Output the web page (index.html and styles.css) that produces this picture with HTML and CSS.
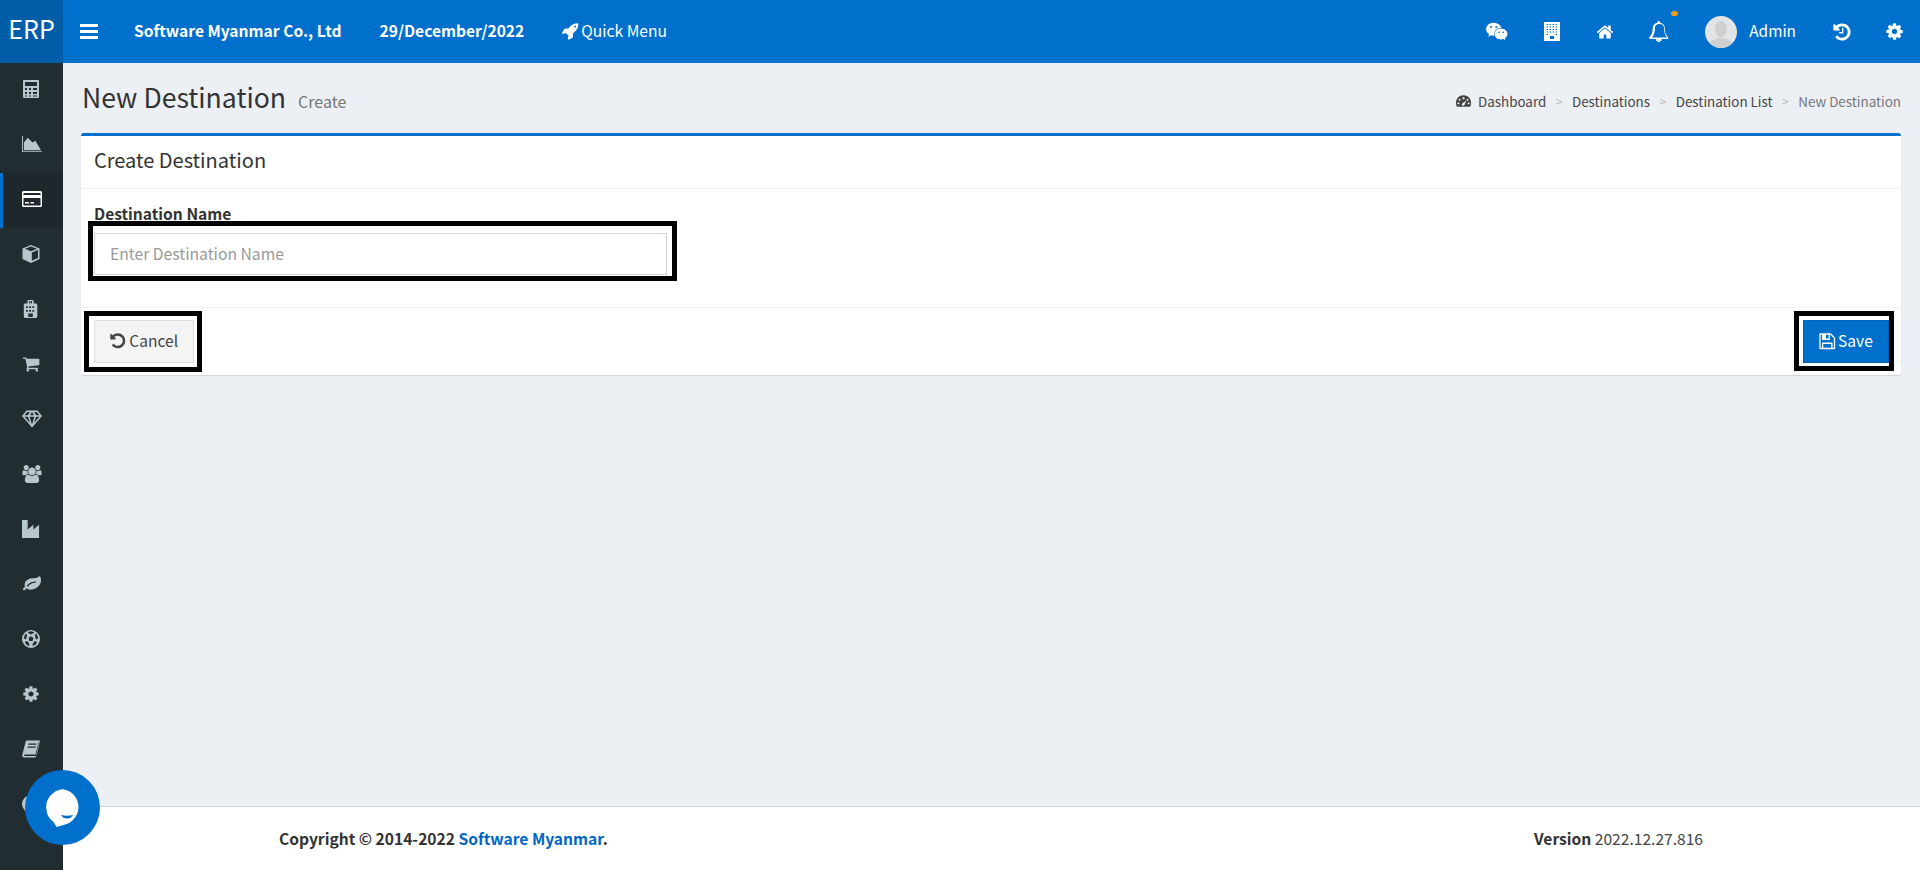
FILE: index.html
```html
<!DOCTYPE html>
<html lang="en">
<head>
<meta charset="utf-8">
<title>New Destination</title>
<link rel="stylesheet" href="styles.css">
</head>
<body>
<svg class="sprites" aria-hidden="true">
  <symbol id="i-undo" viewBox="0 0 1792 1792"><path d="M1664 896q0 156-61 298t-164 245-245 164-298 61q-172 0-327-72.500t-264-204.500q-7-10-6.500-22.500t8.500-20.500l137-138q10-9 25-9 16 2 23 12 73 95 179 147t225 52q104 0 198.500-40.500t163.500-109.500 109.500-163.500 40.500-198.500-40.500-198.500-109.500-163.500-163.500-109.500-198.500-40.500q-98 0-188 35.500t-160 101.500l137 138q31 30 14 69-17 40-59 40h-448q-26 0-45-19t-19-45v-448q0-42 40-59 39-17 69 14l130 129q107-101 244.500-156.500t284.500-55.500q156 0 298 61t245 164 164 245 61 298z"/></symbol>
</svg>
<header class="topbar">
  <div class="logo">ERP</div>
  <div class="bars"><span></span><span></span><span></span></div>
  <div class="company">Software Myanmar Co., Ltd</div>
  <div class="date">29/December/2022</div>
  <div class="quick">
    <svg class="ico-rocket" viewBox="0 0 1792 1792"><path d="M1504 448q0-40-28-68t-68-28-68 28-28 68 28 68 68 28 68-28 28-68zm224-288q0 249-75.500 430.500t-253.500 360.500q-81 80-195 176l-20 379q-2 16-16 26l-384 224q-7 4-16 4-12 0-23-9l-64-64q-13-14-8-32l85-276-281-281-276 85q-3 1-9 1-14 0-23-9l-64-64q-17-19-5-39l224-384q10-14 26-16l379-20q96-114 176-195 188-187 358-258t431-71q14 0 24 9.500t10 22.500z"/></svg>
    <span>Quick Menu</span>
  </div>
  <div class="top-right">
    <svg class="t-wechat" viewBox="0 0 2048 1792"><path d="M580 461q0-41-25-66t-66-25q-43 0-76 25.500t-33 65.500q0 39 33 64.500t76 25.500q41 0 66-24.500t25-65.500zm743 507q0-28-25.500-50t-65.500-22q-27 0-49.500 22.500t-22.500 49.500q0 28 22.500 50.500t49.500 22.500q40 0 65.500-22t25.500-51zm-236-507q0-41-24.500-66t-65.500-25q-43 0-76 25.500t-33 65.500q0 39 33 64.500t76 25.500q41 0 65.500-24.500t24.500-65.500zm635 507q0-28-26-50t-65-22q-27 0-49.500 22.500t-22.500 49.500q0 28 22.500 50.500t49.500 22.500q39 0 65-22t26-51zm-266-397q-31-4-70-4-169 0-311 77t-223.500 208.500-81.500 287.500q0 78 23 152-35 3-68 3-26 0-50-1.500t-55-6.500-44.500-7-54.500-10.500-50-10.500l-253 127 72-218q-290-203-290-490 0-169 97.500-311t264-223.500 363.500-81.500q176 0 332.500 66t262 182.500 136.500 260.500zm592 561q0 117-68.500 223.500t-185.500 193.500l55 181-199-109q-150 37-218 37-169 0-311-70.500t-223.500-191.500-81.500-264 81.500-264 223.500-191.500 311-70.500q161 0 303 70.500t227.500 192 85.500 263.500z"/></svg>
    <svg class="t-building" viewBox="0 0 32 38"><path fill-rule="evenodd" d="M0 0h32v38H0zM5 4v2h3V4zm6 0v2h3V4zm6 0v2h3V4zm6 0v2h3V4zM5 9v2h3V9zm6 0v2h3V9zm6 0v2h3V9zm6 0v2h3V9zM5 14v2h3v-2zm6 0v2h3v-2zm6 0v2h3v-2zm6 0v2h3v-2zM5 19v2h3v-2zm6 0v2h3v-2zm6 0v2h3v-2zm6 0v2h3v-2zM5 24v2h3v-2zm18 0v2h3v-2zM12 28v6h8v-6z"/></svg>
    <svg class="t-home" viewBox="0 0 1792 1792"><path d="M1472 992v480q0 26-19 45t-45 19h-384v-384h-256v384h-384q-26 0-45-19t-19-45v-480q0-1 .5-3t.5-3l575-474 575 474q1 2 1 6zm223-69l-62 74q-8 9-21 11h-3q-13 0-21-7l-692-577-692 577q-12 8-24 7-13-2-21-11l-62-74q-8-10-7-23.500t11-21.500l719-599q32-26 76-26t76 26l244 204v-195q0-14 9-23t23-9h192q14 0 23 9t9 23v408l219 182q10 8 11 21.500t-7 23.500z"/></svg>
    <div class="bell-wrap">
      <svg class="t-bell" viewBox="0 0 1792 1792"><path d="M912 1696q0-16-16-16-59 0-101.500-42.500t-42.500-101.500q0-16-16-16t-16 16q0 73 51.500 124.500t124.500 51.500q16 0 16-16zm-666-288h1300q-266-300-266-832 0-51-24-105t-69-103-121.500-80.500-169.500-31.500-169.500 31.500-121.500 80.500-69 103-24 105q0 532-266 832zm1418 0q0 52-38 90t-90 38h-448q0 106-75 181t-181 75-181-75-75-181h-448q-52 0-90-38t-38-90q50-42 91-88t85-119.500 74.500-158.500 50-206 19.500-260q0-152 117-282.500t307-158.500q-8-19-8-39 0-40 28-68t68-28 68 28 28 68q0 20-8 39 190 28 307 158.500t117 282.500q0 139 19.500 260t50 206 74.500 158.500 85 119.500 91 88z"/></svg>
      <span class="dot"></span>
    </div>
    <svg class="avatar" viewBox="0 0 32 32"><defs><clipPath id="av"><circle cx="16" cy="16" r="16"/></clipPath></defs><circle cx="16" cy="16" r="16" fill="#e3e4e6"/><g clip-path="url(#av)" fill="#cfcfd1"><ellipse cx="16" cy="13" rx="6" ry="8"/><path d="M3 32c0-7 6-8 10-10h6c4 2 10 3 10 10z"/></g></svg>
    <span class="admin">Admin</span>
    <svg class="t-history" viewBox="0 0 1792 1792"><use href="#i-undo"/><path d="M1024 544v448q0 14-9 23t-23 9h-320q-14 0-23-9t-9-23v-64q0-14 9-23t23-9h224v-352q0-14 9-23t23-9h64q14 0 23 9t9 23z"/></svg>
    <svg class="t-gear" viewBox="0 0 1792 1792"><path d="M1152 896q0-106-75-181t-181-75-181 75-75 181 75 181 181 75 181-75 75-181zm512-109v222q0 12-8 23t-20 13l-185 28q-19 54-39 91 35 50 107 138 10 12 10 25t-9 23q-27 37-99 108t-94 71q-12 0-26-9l-138-108q-44 23-91 38-16 136-29 186-7 28-36 28h-222q-14 0-24.500-8.500t-11.500-21.500l-28-184q-49-16-90-37l-141 107q-10 9-25 9-14 0-25-11-126-114-165-168-7-10-7-23 0-12 8-23 15-21 51-66.500t54-70.500q-27-50-41-99l-183-27q-13-2-21-12.500t-8-23.500v-222q0-12 8-23t19-13l186-28q14-46 39-92-40-57-107-138-10-12-10-24 0-10 9-23 26-36 98.500-107.500t94.500-71.500q13 0 26 10l138 107q44-23 91-38 16-136 29-186 7-28 36-28h222q14 0 24.500 8.500t11.500 21.500l28 184q49 16 90 37l142-107q9-9 24-9 13 0 25 10 129 119 165 170 7 8 7 22 0 12-8 23-15 21-51 66.500t-54 70.500q26 50 41 98l183 28q13 2 21 12.500t8 23.500z"/></svg>
  </div>
</header>
<div class="layout">
  <nav class="sidebar">
    <a class="nav-item"><svg viewBox="0 0 18 18"><path fill-rule="evenodd" d="M2 0h14a1 1 0 0 1 1 1v16a1 1 0 0 1-1 1H2a1 1 0 0 1-1-1V1a1 1 0 0 1 1-1zm1 2v4h12V2zm0 6v2h2V8zm4 0v2h2V8zm4 0v2h4V8zM3 12v2h2v-2zm4 0v2h2v-2zm4 0v2h4v-2zM3 15.500v1h2v-1zm4 0v1h2v-1zm4 0v1h4v-1z"/></svg></a>
    <a class="nav-item"><svg class="wide" viewBox="0 0 21 17"><path d="M0 0h1v16h20v1H0z"/><path d="M2 15V7l4-5 5 5 3-2 6 10z"/></svg></a>
    <a class="nav-item active"><svg class="wide" viewBox="0 0 20 16"><path fill-rule="evenodd" d="M1.500 0h17A1.500 1.500 0 0 1 20 1.500v13a1.500 1.500 0 0 1-1.500 1.500h-17A1.500 1.500 0 0 1 0 14.500v-13A1.500 1.500 0 0 1 1.500 0zM1.500 2v2h17V2zm0 5v7.500h17V7zM3 11h4v1.500H3zm5.500 0H12v1.500H8.500z"/></svg></a>
    <a class="nav-item"><svg viewBox="0 0 18 18"><path fill-rule="evenodd" d="M9 0l8.500 3.500v10.500L9 18 .5 14V3.500zM3 3.800L9 6.200l6-2.400-6-2.300zM9.800 7.600v8.200l6.200-2.800V5.100z"/></svg></a>
    <a class="nav-item"><svg viewBox="0 0 18 20"><path fill-rule="evenodd" d="M5 4V1l1-1h5l1 1v3h3l1 1v14l-1 1H2l-1-1V5l1-1zm2-3v3h1V3h1v1h1V1H9v1H8V1zM3.500 7v2h2V7zm3.500 0v2h2V7zm3.500 0v2h2V7zM3.500 11v2h2v-2zm3.500 0v2h2v-2zm3.500 0v2h2v-2zM6 15v4h5v-4z"/></svg></a>
    <a class="nav-item"><svg viewBox="0 0 1792 1792"><path d="M704 1536q0 52-38 90t-90 38-90-38-38-90 38-90 90-38 90 38 38 90zm896 0q0 52-38 90t-90 38-90-38-38-90 38-90 90-38 90 38 38 90zm128-1088v512q0 24-16.500 42.500t-40.500 21.500l-1044 122q13 60 13 70 0 16-24 64h920q26 0 45 19t19 45-19 45-45 19h-1024q-26 0-45-19t-19-45q0-11 8-31.500t16-36 21.500-40 15.500-29.500l-177-823h-204q-26 0-45-19t-19-45 19-45 45-19h256q16 0 28.500 6.500t19.500 15.500 13 24.500 8 26 5.500 29.500 4.500 26h1201q26 0 45 19t19 45z"/></svg></a>
    <a class="nav-item"><svg class="wide" viewBox="0 0 20 17"><path fill-rule="evenodd" d="M4.500 0h11L20 5.500 10 17 0 5.500zM5.200 1.500L2.500 4.800h3.300L7.800 1.500zm4.800 0L8 4.800h4l-2-3.300zm2.200 0l2 3.300h3.300l-2.700-3.300zM2.600 6.300l5.400 6.200-2-6.200zm5 0L10 14l2.400-7.700zm6.400 0l-2 6.200 5.400-6.200z"/></svg></a>
    <a class="nav-item"><svg class="wide" viewBox="0 0 1920 1792"><path d="M593 896q-162 5-265 128h-134q-82 0-138-40.500t-56-118.500q0-353 124-353 6 0 43.500 21t97.500 42.500 119 21.500q67 0 133-23-5 37-5 66 0 139 81 256zm1071 637q0 120-73 189.500t-194 69.500h-874q-121 0-194-69.500t-73-189.500q0-53 3.500-103.500t14-109 26.500-108.500 43-97.500 62-81 85.500-53.500 111.500-20q10 0 43 21.500t73 48 107 48 135 21.500 135-21.500 107-48 73-48 43-21.500q61 0 111.500 20t85.500 53.500 62 81 43 97.500 26.500 108.500 14 109 3.500 103.500zm-1024-1277q0 106-75 181t-181 75-181-75-75-181 75-181 181-75 181 75 75 181zm704 384q0 159-112.500 271.500t-271.500 112.500-271.500-112.500-112.500-271.500 112.500-271.500 271.500-112.500 271.500 112.500 112.500 271.500zm576 225q0 78-56 118.500t-138 40.500h-134q-103-123-265-128 81-117 81-256 0-29-5-66 66 23 133 23 59 0 119-21.500t97.500-42.500 43.500-21q124 0 124 353zm-128-609q0 106-75 181t-181 75-181-75-75-181 75-181 181-75 181 75 75 181z"/></svg></a>
    <a class="nav-item"><svg viewBox="0 0 19 19"><path d="M0 0h6v10l6-5v5l6-5v14H0z"/></svg></a>
    <a class="nav-item"><svg class="wide" viewBox="0 0 1792 1792"><path d="M1280 704q0-26-19-45t-45-19q-172 0-318 49.500t-259.500 134-235.500 219.500q-19 21-19 45 0 26 19 45t45 19q24 0 45-19 27-24 74-71t67-66q137-124 268.500-176t313.500-52q26 0 45-19t19-45zm512-198q0 95-20 193-46 224-184.500 383t-357.500 268q-214 108-438 108-148 0-286-47-15-5-88-42t-96-37q-16 0-39.500 32t-45 70-52.500 70-60 32q-30 0-51-11t-31-24-27-42q-2-4-6-11t-5.500-10-3-9.500-1.500-13.500q0-35 31-73.500t68-65.500 68-56 31-48q0-4-14-38t-16-44q-9-51-9-104 0-115 43.500-220t119-184.500 170.500-139 204-95.500q55-18 145-25.500t179.500-9 178.500-6 163.500-24 113.500-56.500l29.500-29.500 29.500-28 27-20 36.500-16 43.500-4.500q39 0 70.500 46t47.500 112 24 124 8 96z"/></svg></a>
    <a class="nav-item"><svg viewBox="0 0 19 19"><path fill-rule="evenodd" d="M9.500 0a9.500 9.500 0 1 1 0 19 9.500 9.500 0 0 1 0-19zM6.500 2l-.3 1 3.300 1.800L12.800 3l-.3-1a8 8 0 0 0-6 0zM3.500 4.200L1.800 8.500 4 10.200l1.300-3.900L4.800 4zM15.500 4.200l-1.300-.2-.5 2.300 1.300 3.900 2.200-1.700zM9.500 6.500L6.800 8.500l1 3.200h3.400l1-3.200zM4.800 12l-1.900.7 1.800 3 2.800 1.300.5-1.800-2-3.200zM14.200 12l-1.200 0-2 3.200.5 1.800 2.800-1.300 1.800-3z"/></svg></a>
    <a class="nav-item"><svg viewBox="0 0 1792 1792"><path d="M1152 896q0-106-75-181t-181-75-181 75-75 181 75 181 181 75 181-75 75-181zm512-109v222q0 12-8 23t-20 13l-185 28q-19 54-39 91 35 50 107 138 10 12 10 25t-9 23q-27 37-99 108t-94 71q-12 0-26-9l-138-108q-44 23-91 38-16 136-29 186-7 28-36 28h-222q-14 0-24.500-8.500t-11.500-21.500l-28-184q-49-16-90-37l-141 107q-10 9-25 9-14 0-25-11-126-114-165-168-7-10-7-23 0-12 8-23 15-21 51-66.500t54-70.500q-27-50-41-99l-183-27q-13-2-21-12.500t-8-23.500v-222q0-12 8-23t19-13l186-28q14-46 39-92-40-57-107-138-10-12-10-24 0-10 9-23 26-36 98.500-107.500t94.500-71.500q13 0 26 10l138 107q44-23 91-38 16-136 29-186 7-28 36-28h222q14 0 24.500 8.500t11.500 21.500l28 184q49 16 90 37l142-107q9-9 24-9 13 0 25 10 129 119 165 170 7 8 7 22 0 12-8 23-15 21-51 66.500t-54 70.500q26 50 41 98l183 28q13 2 21 12.500t8 23.500z"/></svg></a>
    <a class="nav-item"><svg viewBox="0 0 18 17"><path fill-rule="evenodd" d="M4 0h14l-3 14q-.3 1.500-2 1.500H3q-1 0-1-.7t1-.8h10.500L16.500 1.500 17 1.800 14 16q-.2 1-1.500 1H2.500Q0 17 .2 14.500z M6.500 3l-.3 1.200h8L14.500 3zM5.800 6l-.3 1.200h8L13.800 6z"/></svg></a>
    <a class="nav-item"><svg viewBox="0 0 18 18"><circle cx="9" cy="9" r="9"/></svg></a>
  </nav>
  <div class="main">
    <main class="content">
      <div class="page-head">
        <h1>New Destination <small>Create</small></h1>
        <ol class="crumbs">
          <li><svg class="gauge" viewBox="0 0 16 12"><path fill-rule="evenodd" d="M8 0a8 8 0 0 1 7 12H1A8 8 0 0 1 8 0zM7 2v2h2V2zM3.500 3.500L2.600 5l1.500 1 1-1.500zM12.500 3.500L10.900 4.500l1 1.500 1.500-1zM11 5.500L7.300 8.200a1.500 1.500 0 1 0 1.900 1.600zM1.500 7.500v2h2v-2zM12.500 7.500v2h2v-2z"/></svg><span>Dashboard</span></li>
          <li class="sep">&gt;</li>
          <li>Destinations</li>
          <li class="sep">&gt;</li>
          <li>Destination List</li>
          <li class="sep">&gt;</li>
          <li class="current">New Destination</li>
        </ol>
      </div>
      <section class="box">
        <div class="box-header">Create Destination</div>
        <div class="box-body">
          <label class="field-label" for="dest">Destination Name</label>
          <div class="marked marked-input">
            <input id="dest" class="text-input" type="text" placeholder="Enter Destination Name">
          </div>
        </div>
        <div class="box-footer">
          <div class="marked marked-cancel">
            <button class="btn btn-default" type="button"><svg viewBox="0 0 1792 1792"><use href="#i-undo"/></svg>Cancel</button>
          </div>
          <div class="marked marked-save">
            <button class="btn btn-primary" type="button"><svg viewBox="0 0 1792 1792"><path d="M512 1536h768v-384h-768v384zm896 0h128v-896q0-14-10-38.500t-20-34.500l-281-281q-10-10-34-20t-39-10v416q0 40-28 68t-68 28h-576q-40 0-68-28t-28-68v-416h-128v1280h128v-416q0-40 28-68t68-28h832q40 0 68 28t28 68v416zm-384-928v-320q0-13-9.500-22.500t-22.500-9.500h-192q-13 0-22.500 9.500t-9.500 22.500v320q0 13 9.500 22.500t22.500 9.500h192q13 0 22.500-9.500t9.500-22.500zm640 32v928q0 40-28 68t-68 28h-1344q-40 0-68-28t-28-68v-1344q0-40 28-68t68-28h928q40 0 88 20t76 48l280 280q28 28 48 76t20 88z"/></svg>Save</button>
          </div>
        </div>
      </section>
    </main>
    <footer class="footer">
      <div><strong>Copyright © 2014-2022 <a class="link">Software Myanmar</a>.</strong></div>
      <div><strong>Version</strong> 2022.12.27.816</div>
    </footer>
  </div>
</div>
<div class="chat">
  <svg viewBox="0 0 75 75"><path fill="#fff" d="M38 19.300a18 18 0 0 1 3.700 34.700L31.700 57l-3.400-5.300A18 18 0 0 1 38 19.300z"/><path fill="#0070cc" d="M36 45q6 1.500 12 0q-2 3.500-6 3.500T36 45z"/></svg>
</div>
</body>
</html>
```
FILE: styles.css
```css
* { box-sizing: border-box; }
html, body { margin: 0; height: 100%; }
body {
  height: 100vh;
  overflow: hidden;
  display: flex;
  flex-direction: column;
  font-family: "Noto Sans CJK SC", "Noto Sans", sans-serif;
  font-size: 14px;
  color: #333;
  background: #ecf0f5;
}
.sprites { display: none; }
svg { fill: currentColor; display: block; flex: none; }

.topbar {
  height: 63px;
  flex: none;
  display: flex;
  align-items: center;
  background: #0070cc;
  color: #fff;
}
.logo {
  width: 63px;
  height: 63px;
  background: #005ea8;
  font-size: 25px;
  line-height: 57px;
  text-align: center;
}
.bars {
  margin-left: 17px;
  width: 18px;
  display: flex;
  flex-direction: column;
  gap: 3px;
  margin-bottom: 1px;
}
.bars span { height: 3px; background: #fff; }
.company, .date { font-weight: 700; font-size: 15.6px; line-height: 20px; margin-bottom: 4px; }
.company { margin-left: 36px; }
.date { margin-left: 38px; }
.quick { margin-left: 37px; display: flex; align-items: center; gap: 2px; font-size: 15.6px; line-height: 20px; margin-bottom: 2px; }
.quick span { margin-bottom: 2px; }
.ico-rocket { width: 18px; height: 18px; }
.top-right { margin-left: auto; padding-right: 16.400px; display: flex; align-items: center; }
.t-wechat { width: 21.500px; height: 19px; }
.t-building { width: 16px; height: 19px; margin-left: 35.800px; }
.t-home { width: 18px; height: 18px; margin-left: 36.400px; }
.bell-wrap { position: relative; margin-left: 35.500px; }
.t-bell { width: 21px; height: 21px; }
.dot { position: absolute; left: 21.500px; top: -10px; width: 7px; height: 5px; border-radius: 3px; background: #f39c12; }
.avatar { width: 32px; height: 32px; margin-left: 34.800px; }
.admin { margin-left: 12px; font-size: 15.400px; line-height: 20px; margin-bottom: 4px; }
.t-history { width: 20px; height: 20px; margin-left: 35.600px; }
.t-gear { width: 19px; height: 19px; margin-left: 33px; }

.layout { flex: 1; min-height: 0; display: flex; }
.sidebar { width: 63px; flex: none; background: #222d32; color: #b8c7ce; overflow: hidden; }
.nav-item {
  height: 55px;
  padding: 0 0 3px 22px;
  display: flex;
  align-items: center;
}
.nav-item svg { width: 18px; height: 18px; }
.nav-item svg.wide { width: 20px; }
.nav-item.active {
  color: #fff;
  background: #1e282c;
  box-shadow: inset 3px 0 0 #0070cc;
}

.main { flex: 1; min-width: 0; display: flex; flex-direction: column; }
.content { flex: 1; min-height: 0; background: #ecf0f5; padding: 0 19px 0 18px; }
.page-head { height: 70px; display: flex; justify-content: space-between; align-items: center; padding: 1px 0 0 1px; }
h1 { margin: 0; font-size: 26.600px; font-weight: 400; line-height: 36px; color: #333; }
h1 small { margin-left: 6px; font-size: 16px; font-weight: 400; color: #777; }
.crumbs { margin: 4px 0 0; padding: 0; list-style: none; display: flex; align-items: center; font-size: 13.400px; line-height: 20px; color: #444; }
.crumbs li { display: flex; align-items: center; }
.sep { color: #bbb; margin: 0 9.500px; font-size: 12px; }
.current { color: #777; }
.gauge { width: 15px; height: 12px; margin-right: 7px; }

.box {
  background: #fff;
  border-top: 3px solid #0070cc;
  border-radius: 3px;
  box-shadow: 0 1px 1px rgba(0, 0, 0, .12);
}
.box-header {
  height: 53px;
  padding: 0 13px;
  font-size: 20px;
  line-height: 47px;
  border-bottom: 1px solid #f1f1f1;
}
.box-body { height: 118px; padding: 14px 13px 0; }
.field-label { display: block; font-weight: 700; font-size: 15.600px; line-height: 20px; margin-bottom: 10px; }
.text-input {
  display: block;
  width: 573px;
  height: 42px;
  padding: 0 15px 2px;
  border: 1px solid #d2d6de;
  border-radius: 0;
  font: 15.700px "Noto Sans CJK SC", "Noto Sans", sans-serif;
  outline: none;
  color: #555;
}
.text-input::placeholder { color: #999; opacity: 1; }
.box-footer {
  height: 68px;
  padding: 12px 12px 12px 13px;
  border-top: 1px solid #f1f1f1;
  display: flex;
  justify-content: space-between;
}
.marked { position: relative; }
.marked::after { content: ""; position: absolute; border: 5px solid #000; pointer-events: none; }
.marked-input { width: 573px; }
.marked-input::after { left: -6px; right: -10px; top: -12px; bottom: -6px; }
.marked-cancel::after { left: -10px; right: -8px; top: -9px; bottom: -9px; }
.marked-save::after { left: -9px; right: -5px; top: -9px; bottom: -8px; }
.btn {
  display: flex;
  align-items: center;
  height: 43px;
  border-radius: 0;
  padding-top: 0;
  padding-bottom: 3px;
  font: 15.600px/20px "Noto Sans CJK SC", "Noto Sans", sans-serif;
  cursor: pointer;
}
.btn-default { width: 100px; padding-left: 14px; padding-right: 0; background: #f4f4f4; border: 1px solid #ddd; color: #444; }
.btn-default svg { width: 17.500px; height: 17.500px; margin: 2px 2.750px 0 0; }
.btn-primary { width: 86px; padding-left: 14px; padding-right: 0; background: #0070cc; border: 1px solid #0064b6; color: #fff; }
.btn-primary svg { width: 18.500px; height: 18.500px; margin: 2px 1.500px 0 0; }

.footer {
  height: 64px;
  flex: none;
  background: #fff;
  border-top: 1px solid #d2d6de;
  padding: 0 217px 2px 216px;
  display: flex;
  justify-content: space-between;
  align-items: center;
  font-size: 15.600px;
  line-height: 20px;
  color: #444;
}
.footer strong { color: #333; }
.link { color: #0066c4; }

.chat {
  position: fixed;
  left: 25px;
  top: 770px;
  width: 75px;
  height: 75px;
  border-radius: 50%;
  background: #0070cc;
}
```
